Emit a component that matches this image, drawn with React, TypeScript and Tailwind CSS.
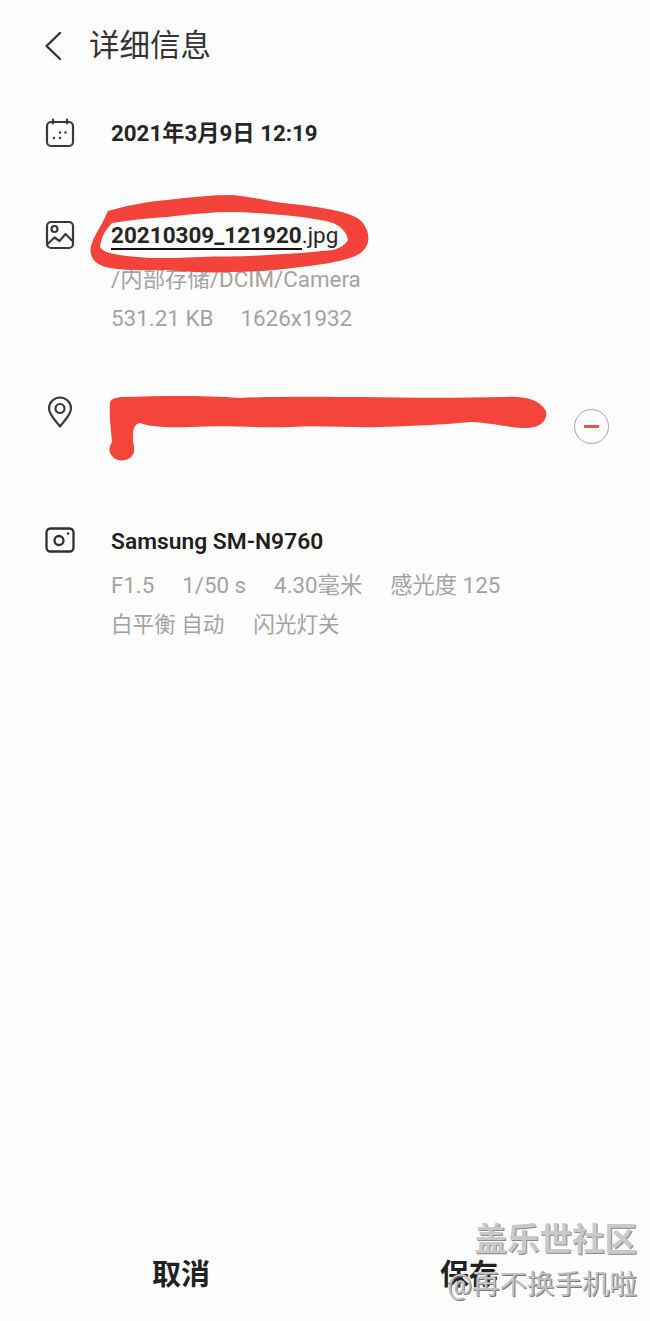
const sans = "font-['Roboto','Noto_Sans_CJK_SC',sans-serif]";

function CalendarIcon() {
  return (
    <svg width="30" height="30" viewBox="0 0 30 30" fill="none" stroke="#3a3a3a" strokeWidth="2.200">
      <rect x="2" y="4" width="26" height="24" rx="4" />
      <path d="M8 1.500v4M22 1.500v4" strokeLinecap="round" />
      <g fill="#3a3a3a" stroke="none">
        <circle cx="9" cy="20" r="1.200" />
        <circle cx="15" cy="20" r="1.200" />
        <circle cx="15" cy="14.500" r="1.200" />
        <circle cx="20.500" cy="14.500" r="1.200" />
      </g>
    </svg>
  );
}

function ImageIcon() {
  return (
    <svg width="30" height="30" viewBox="0 0 30 30" fill="none" stroke="#3a3a3a" strokeWidth="2.200">
      <rect x="2" y="2" width="26" height="26" rx="4" />
      <circle cx="9.500" cy="9" r="3" />
      <path d="M2.500 24l7-6.500 5 3.500 6-7 7 7" strokeLinejoin="round" />
    </svg>
  );
}

function PinIcon() {
  return (
    <svg width="26" height="32" viewBox="0 0 26 32" fill="none" stroke="#3a3a3a" strokeWidth="2.200">
      <path d="M13 30.500C8 24 2 18.500 2 12.500a11 11 0 0 1 22 0c0 6-6 11.500-11 18z" strokeLinejoin="round" />
      <circle cx="13" cy="12.500" r="4.500" />
    </svg>
  );
}

function CameraIcon() {
  return (
    <svg width="30" height="26" viewBox="0 0 30 26" fill="none" stroke="#2f2f2f" strokeWidth="2.300">
      <rect x="1.500" y="1.500" width="27" height="23" rx="4" />
      <circle cx="14" cy="13.500" r="4.500" />
      <circle cx="23" cy="6.500" r="1.300" fill="#2f2f2f" stroke="none" />
    </svg>
  );
}

function Row({ icon, children }: { icon: React.ReactNode; children: React.ReactNode }) {
  return (
    <div className="flex pl-[45px]">
      <div className="w-[66px] shrink-0">{icon}</div>
      <div className="min-w-0 flex-1">{children}</div>
    </div>
  );
}

export default function App() {
  return (
    <div className={`relative flex h-[1321px] w-[650px] flex-col overflow-hidden bg-[#fdfdfd] ${sans}`}>
      <header className="flex h-[91px] items-center pt-[1px] pl-[44px]">
        <svg width="18" height="30" viewBox="0 0 18 30" fill="none" stroke="#333" strokeWidth="2.400" strokeLinecap="round" strokeLinejoin="round">
          <path d="M16 2L2.500 15 16 28" />
        </svg>
        <h1 className="ml-[27px] pt-[1px] text-[30.500px] leading-none font-normal text-[#333]">详细信息</h1>
      </header>

      <section className="mt-[27px]">
        <Row icon={<CalendarIcon />}>
          <p className="text-[22.300px] leading-[30px] font-bold text-[#262626]">2021年3月9日 12:19</p>
        </Row>
      </section>

      <section className="mt-[72px]">
        <Row icon={<ImageIcon />}>
          <p className="text-[22.500px] leading-[30px] text-[#262626]">
            <span className="border-b-2 border-[#111] font-bold">20210309_121920</span>.jpg
          </p>
          <p className="mt-[14px] text-[22.400px] leading-[30px] text-[#a3a3a3]">/内部存储/DCIM/Camera</p>
          <p className="mt-[9px] flex gap-[27px] text-[22.400px] leading-[30px] text-[#a3a3a3]">
            <span>531.21 KB</span>
            <span>1626x1932</span>
          </p>
        </Row>
      </section>

      <section className="mt-[63px] h-[58px]">
        <div className="flex pl-[47px]">
          <div className="w-[64px] shrink-0"><PinIcon /></div>
          <div className="flex-1" />
          <div className="mt-[13px] mr-[41px] flex h-[35px] w-[35px] items-center justify-center rounded-full border border-[#a8a8a8]">
            <div className="h-[2.500px] w-[15px] bg-[#dd5a44]" />
          </div>
        </div>
      </section>

      <section className="mt-[72px]">
        <Row icon={<div className="mt-[1px]"><CameraIcon /></div>}>
          <p className="pt-[1px] text-[22.800px] leading-[30px] font-semibold text-[#1f1f1f]">Samsung SM-N9760</p>
          <p className="mt-[13px] flex gap-[28px] text-[22.300px] leading-[30px] text-[#a3a3a3]">
            <span>F1.5</span>
            <span>1/50 s</span>
            <span>4.30毫米</span>
            <span>感光度 125</span>
          </p>
          <p className="mt-[10px] flex gap-[29px] text-[21.600px] leading-[30px] text-[#a3a3a3]">
            <span>白平衡 自动</span>
            <span>闪光灯关</span>
          </p>
        </Row>
      </section>

      <footer className="mt-auto mb-[27px] grid grid-cols-2 px-[37px] text-center text-[29px] leading-[38px] font-bold text-[#222]">
        <span>取消</span>
        <span>保存</span>
      </footer>

      {/* red scribbles on top of the screenshot */}
      <svg className="absolute top-0 left-0" width="650" height="480" viewBox="0 0 650 480">
        <path
          fillRule="evenodd"
          fill="#f4433a"
          d="M108 211C125 206 145 202 167 200C190 197 212 195 233 195C252 197 268 201 283 203C302 205 320 207 333 210C348 213 358 217 363 223C368 230 369 236 368 242C366 249 361 254 353 257C338 262 320 265 300 267C278 270 255 272 233 272C210 273 188 272 167 270C146 270 126 271 110 268C100 266 94 262 92 257C90 252 90 248 92 243C94 237 97 232 100 227C103 222 105 217 108 211Z
             M112 223C130 220 148 218 167 217C190 214 212 212 233 212C250 212 268 214 283 215C302 217 320 219 333 223C342 227 347 233 348 240C345 245 340 248 333 250C312 252 290 254 267 255C245 257 222 256 200 257C183 258 166 258 150 258C136 257 122 256 110 253C105 252 102 250 100 247C101 238 105 230 112 223Z"
        />
        <path
          fill="#f5453a"
          d="M122 397C160 396 200 395 240 398C280 396 330 397 360 397C410 398 460 398 505 397C525 396 540 400 546 411C548 420 541 428 525 428C510 428 495 423 470 422C440 425 410 426 380 427C350 428 320 425 290 427C260 428 225 425 190 427C170 428 150 427 140 423C136 423 134 427 133 432V442C135 448 135 454 130 458C124 462 116 461 112 456C108 451 109 447 112 442C111 430 109 415 110 403C111 398 116 398 122 397Z"
        />
      </svg>

      {/* watermark */}
      <div className="absolute right-[13px] bottom-[20px] flex flex-col items-end text-[#9c9c9c]">
        <span className="text-[32.500px] leading-[40px] font-bold text-[#c9c9c9] [text-shadow:1px_1px_0_#8a8a8a]">盖乐世社区</span>
        <span className="mt-[9px] text-[27.500px] leading-[32px] text-[#c2c2c2] [text-shadow:1px_1px_0_#777]">@再不换手机啦</span>
      </div>
    </div>
  );
}
